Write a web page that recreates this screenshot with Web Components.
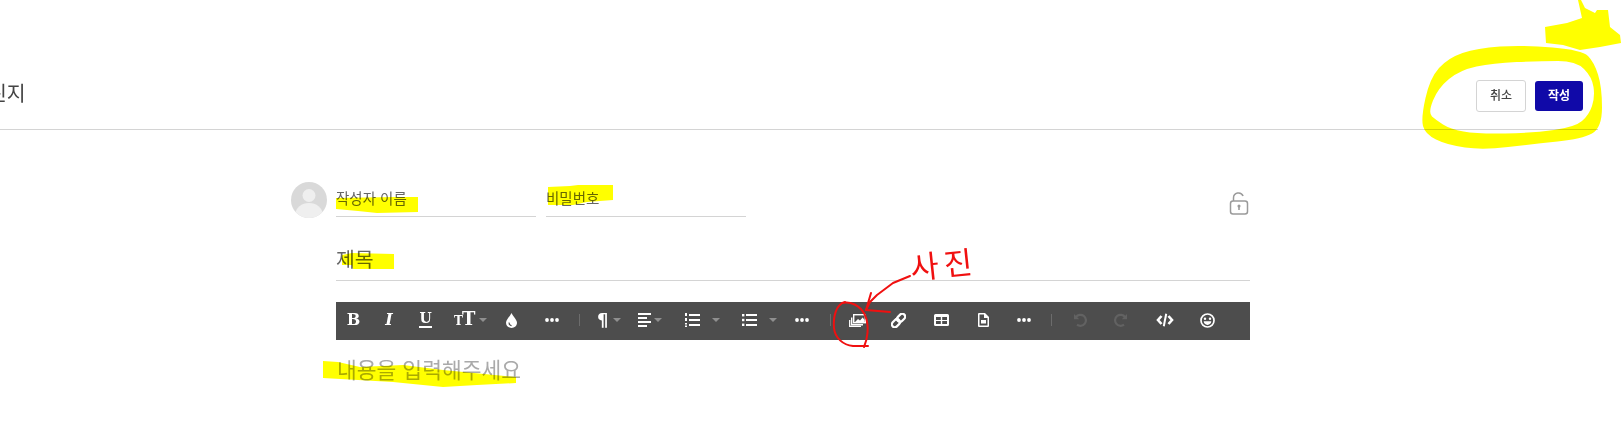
<!DOCTYPE html>
<html lang="ko">
<head>
<meta charset="utf-8">
<title>글쓰기</title>
<style>
html,body{margin:0;padding:0;background:#fff;}
body{height:424px;overflow:hidden;position:relative;font-family:"Noto Sans CJK KR","Noto Sans",sans-serif;color:#444;}
</style>
</head>
<body>
<page-header></page-header>
<write-form></write-form>
<mark-up></mark-up>

<script>
class pageHeader extends HTMLElement {
    constructor(){
        super();
        this.attachShadow({mode:'open'});
    }
    getTemplate(){
        const template = document.createElement('template')
        template.innerHTML = `
            <div class="header">
                <div class="header__title">린지</div>
                <div class="header__buttons">
                    <button class="cancel">취소</button>
                    <button class="submit">작성</button>
                </div>
            </div>
            ${this.getStyles()}
        `;
        return template;
    }
    getStyles(){
        return `
            <style>
                :host{display:block;width:1598px;overflow:hidden;}
                .header{
                    height:129px;
                    border-bottom:1px solid #d4d4d4;
                    display:flex;
                    justify-content:space-between;
                    align-items:flex-end;
                    padding:0 15px 0 0;
                }
                .header__title{
                    font-size:20.5px;
                    line-height:30px;
                    margin:0 0 22px -12px;
                    color:#444;
                }
                .header__buttons{display:flex;align-items:center;gap:9px;margin-bottom:17px;}
                button{
                    font-family:inherit;
                    font-size:12px;
                    font-weight:500;
                    border-radius:3px;
                    padding:0 0 3px;
                    box-sizing:border-box;
                }
                .cancel{width:50px;height:32px;background:#fff;border:1px solid #d4d4d4;color:#444;}
                .submit{width:48px;height:30px;background:#1009a8;border:0;color:#fff;font-weight:700;}
            </style>
        `
    }
    render(){
        this.shadowRoot.appendChild(this.getTemplate().content.cloneNode(true))
    }
    connectedCallback(){
        this.render();
    }
}
customElements.define("page-header", pageHeader)

class lineField extends HTMLElement {
    constructor(){
        super();
        this.attachShadow({mode:'open'});
    }
    connectedCallback(){
        this.shadowRoot.innerHTML = `
            <style>
                :host{display:block;width:200px;height:35px;box-sizing:border-box;border-bottom:1px solid #d4d4d4;}
                div{font-size:14.5px;line-height:20px;padding:6px 0 0 0;color:#666;}
            </style>
            <div><slot></slot></div>
        `
    }
}
customElements.define("line-field", lineField)

class toolBtn extends HTMLElement {
    constructor(){
        super();
        this.attachShadow({mode:'open'});
    }
    connectedCallback(){
        const w = this.getAttribute('w') || 36;
        const caret = this.hasAttribute('caret');
        const gap = this.getAttribute('gap') || 5;
        const off = this.getAttribute('off') || 0;
        this.shadowRoot.innerHTML = `
            <style>
                :host{display:flex;align-items:center;justify-content:${caret?'flex-start':'center'};width:${w}px;height:36px;color:#fff;flex:none;margin-bottom:2px;}
                .wrap{display:flex;align-items:center;margin-left:${off}px;}
                .caret{width:0;height:0;border-left:4px solid transparent;border-right:4px solid transparent;border-top:4px solid #8f8f8f;margin-left:${gap}px;}
            </style>
            <div class="wrap"><slot></slot>${caret?'<span class="caret"></span>':''}</div>
        `
    }
}
customElements.define("tool-btn", toolBtn)

class editorToolbar extends HTMLElement {
    constructor(){
        super();
        this.attachShadow({mode:'open'});
    }
    connectedCallback(){
        const dots = `<svg width="14" height="4" viewBox="0 0 14 4" fill="#fff"><circle cx="2" cy="2" r="1.9"/><circle cx="7" cy="2" r="1.9"/><circle cx="12" cy="2" r="1.9"/></svg>`;
        this.shadowRoot.innerHTML = `
            <style>
                :host{display:flex;align-items:center;height:38px;background:#4d4d4d;color:#fff;}
                .t{font-family:"DejaVu Serif","Liberation Serif",serif;font-weight:700;line-height:16px;}
                .sep{width:1px;height:12px;background:#6c6c6c;flex:none;margin:0 5px 2px 4px;}
                svg{display:block;}
            </style>
            <tool-btn w="35"><span class="t" style="font-size:16px">B</span></tool-btn>
            <tool-btn w="36"><span class="t" style="font-size:16px;font-style:italic">I</span></tool-btn>
            <tool-btn w="37"><span class="t" style="font-size:14px;line-height:13px;border-bottom:2px solid #fff;padding-bottom:1px">U</span></tool-btn>
            <tool-btn w="50" caret off="10" gap="5"><span class="t" style="font-size:18px;letter-spacing:-1px"><span style="font-size:12px">T</span>T</span></tool-btn>
            <tool-btn w="35">
                <svg width="11" height="15" viewBox="0 0 11 15"><path d="M5.500 0C7 3.400 11 6.600 11 9.800 11 12.700 8.600 15 5.500 15S0 12.700 0 9.800C0 6.600 4 3.400 5.500 0Z" fill="#fff"/><path d="M3 9.500c0 2 1 3 2.600 3.200" stroke="#4d4d4d" stroke-width="1.100" fill="none"/></svg>
            </tool-btn>
            <tool-btn w="46">${dots}</tool-btn>
            <div class="sep"></div>
            <tool-btn w="46" caret off="12" gap="5"><span class="t" style="font-size:18px;font-family:'DejaVu Sans',sans-serif">¶</span></tool-btn>
            <tool-btn w="46" caret off="7" gap="3">
                <svg width="13" height="14" viewBox="0 0 13 14" fill="#fff"><rect width="13" height="2"/><rect y="4" width="9" height="2"/><rect y="8" width="13" height="2"/><rect y="12" width="9" height="2"/></svg>
            </tool-btn>
            <tool-btn w="55" caret off="8" gap="12">
                <svg width="15" height="14" viewBox="0 0 15 14" fill="#fff"><rect x="4" y="1" width="11" height="2"/><rect x="4" y="6" width="11" height="2"/><rect x="4" y="11" width="11" height="2"/><rect x="0" y="0" width="2" height="3"/><rect x="0" y="5" width="2" height="3"/><rect x="0" y="10" width="2" height="1.500"/><rect x="0" y="12.500" width="2" height="1.500"/></svg>
            </tool-btn>
            <tool-btn w="46" caret off="10" gap="12">
                <svg width="15" height="12" viewBox="0 0 15 12" fill="#fff"><rect x="4" y="0" width="11" height="2"/><rect x="4" y="5" width="11" height="2"/><rect x="4" y="10" width="11" height="2"/><rect x="0" y="0" width="2.400" height="2.400"/><rect x="0" y="4.800" width="2.400" height="2.400"/><rect x="0" y="9.600" width="2.400" height="2.400"/></svg>
            </tool-btn>
            <tool-btn w="48">${dots}</tool-btn>
            <div class="sep"></div>
            <tool-btn w="43">
                <svg width="17" height="13" viewBox="0 0 17 13" fill="none" stroke="#fff">
                    <rect x="4.700" y=".7" width="11.600" height="8" stroke-width="1.400"/>
                    <path d="M6 8l3-3 2 1.600 2.600-3 2 2.400v2H6Z" fill="#fff" stroke="none"/>
                    <path d="M2.700 3.500v7.300H14" stroke-width="1.400"/>
                    <path d="M.7 6v6.300H12" stroke-width="1.300"/>
                </svg>
            </tool-btn>
            <tool-btn w="38">
                <svg width="15" height="15" viewBox="0 0 15 15" fill="none" stroke="#fff" stroke-width="2.200">
                    <rect x="7.200" y=".3" width="5.800" height="9" rx="2.900" transform="rotate(45 10.100 4.800)"/>
                    <rect x="2" y="5.700" width="5.800" height="9" rx="2.900" transform="rotate(45 4.900 10.200)"/>
                </svg>
            </tool-btn>
            <tool-btn w="48">
                <svg width="15" height="12" viewBox="0 0 15 12" fill="#fff" fill-rule="evenodd"><path d="M1.500 0h12A1.500 1.500 0 0 1 15 1.500v9a1.500 1.500 0 0 1-1.500 1.500h-12A1.500 1.500 0 0 1 0 10.500v-9A1.500 1.500 0 0 1 1.500 0ZM2 3v2.900h4.800V3Zm6.200 0v2.900H13V3ZM2 7.100V10h4.800V7.100Zm6.200 0V10H13V7.100Z"/></svg>
            </tool-btn>
            <tool-btn w="36">
                <svg width="11" height="14" viewBox="0 0 11 14" fill="#fff" fill-rule="evenodd"><path d="M0 1a1 1 0 0 1 1-1h6l4 4v9a1 1 0 0 1-1 1H1a1 1 0 0 1-1-1Zm1.500.500v11h8V5H6V1.500ZM3 7h5v3.500H3Z"/></svg>
            </tool-btn>
            <tool-btn w="46">${dots}</tool-btn>
            <div class="sep" style="margin-right:9px"></div>
            <tool-btn w="38">
                <svg width="14" height="14" viewBox="0 0 14 14" fill="none" stroke="#626262" stroke-width="2.200"><path d="M3 4A5.500 5.500 0 1 1 4 11.600"/><path d="M1 1v5.200h5.200" fill="#626262" stroke="none"/></svg>
            </tool-btn>
            <tool-btn w="44">
                <svg width="14" height="14" viewBox="0 0 14 14" fill="none" stroke="#626262" stroke-width="2.200"><path d="M11 4A5.500 5.500 0 1 0 10 11.600"/><path d="M13 1v5.200H7.800" fill="#626262" stroke="none"/></svg>
            </tool-btn>
            <tool-btn w="44">
                <svg width="18" height="14" viewBox="0 0 18 14" fill="none" stroke="#fff" stroke-width="2.600"><path d="M5.500 3 2 7l3.500 4"/><path d="M12.500 3 16 7l-3.500 4"/><path d="M10.200 .8 7.800 13.200" stroke-width="2"/></svg>
            </tool-btn>
            <tool-btn w="41">
                <svg width="15" height="15" viewBox="0 0 15 15"><circle cx="7.500" cy="7.500" r="6.500" fill="none" stroke="#fff" stroke-width="1.700"/><circle cx="5" cy="5.700" r="1.200" fill="#fff"/><circle cx="10" cy="5.700" r="1.200" fill="#fff"/><path d="M3.700 8.300h7.600c0 2-1.700 3.600-3.800 3.600S3.700 10.300 3.700 8.300Z" fill="#fff"/></svg>
            </tool-btn>
        `
    }
}
customElements.define("editor-toolbar", editorToolbar)

class writeForm extends HTMLElement {
    constructor(){
        super();
        this.attachShadow({mode:'open'});
    }
    getTemplate(){
        const template = document.createElement('template')
        template.innerHTML = `
            <section class="main">
                <div class="main__author">
                    <svg class="avatar" width="36" height="36" viewBox="0 0 36 36">
                        <clipPath id="c"><circle cx="18" cy="18" r="18"/></clipPath>
                        <circle cx="18" cy="18" r="18" fill="#d9d9d9"/>
                        <circle cx="18" cy="13.500" r="6.500" fill="#efefef"/>
                        <ellipse cx="18" cy="32" rx="13.500" ry="11" fill="#efefef" clip-path="url(#c)"/>
                    </svg>
                    <line-field>작성자 이름</line-field>
                    <line-field>비밀번호</line-field>
                    <svg class="lock" width="20" height="24" viewBox="0 0 20 24" fill="none" stroke="#9a9a9a" stroke-width="1.500">
                        <rect x="1.500" y="9" width="17" height="13" rx="2.500"/>
                        <path d="M4.500 9V6a5 5 0 0 1 9.600-2"/>
                        <path d="M10 14v4" stroke-width="1.600"/><circle cx="10" cy="14" r=".8" fill="#9a9a9a"/>
                    </svg>
                </div>
                <div class="main__body">
                    <div class="title">제목</div>
                    <editor-toolbar></editor-toolbar>
                    <div class="placeholder">내용을 입력해주세요</div>
                </div>
            </section>
            ${this.getStyles()}
        `;
        return template;
    }
    getStyles(){
        return `
            <style>
                :host{display:block;}
                .main{width:959px;margin:52px 0 0 291px;}
                .main__author{display:flex;align-items:flex-start;gap:10px;height:36px;}
                .avatar{flex:none;margin-right:-1px;}
                .lock{margin-left:auto;margin-top:10px;margin-right:1px;flex:none;}
                .main__body{margin-left:45px;}
                .title{
                    margin-top:22px;
                    margin-bottom:21px;
                    height:41px;
                    box-sizing:border-box;
                    border-bottom:1px solid #d4d4d4;
                    font-size:20.500px;
                    line-height:30px;
                    color:#666;
                    padding-top:3px;
                }
                .placeholder{
                    margin-top:13px;
                    font-size:21.500px;
                    line-height:32px;
                    color:#aaa;
                    padding-left:1px;
                }
            </style>
        `
    }
    render(){
        this.shadowRoot.appendChild(this.getTemplate().content.cloneNode(true))
    }
    connectedCallback(){
        this.render();
    }
}
customElements.define("write-form", writeForm)

// 스크린샷 위에 그려진 형광펜, 빨간펜 표시
class markUp extends HTMLElement {
    constructor(){
        super();
        this.attachShadow({mode:'open'});
    }
    smooth(pts){
        const mid = (a,b) => [(a[0]+b[0])/2,(a[1]+b[1])/2];
        let d = 'M'+mid(pts[pts.length-1],pts[0]).join(' ');
        pts.forEach((p,i) => {
            d += 'Q'+p.join(' ')+' '+mid(p,pts[(i+1)%pts.length]).join(' ');
        });
        return d+'Z';
    }
    connectedCallback(){
        const outer = [[1421,118],[1430,78],[1448,58],[1477,48],[1523,45],[1582,50],[1594,62],[1602,87],[1602,128],[1582,139],[1533,144],[1483,150],[1447,145],[1425,134]];
        const inner = [[1428,113],[1438,88],[1460,70],[1493,63],[1540,61],[1576,61],[1592,77],[1595,97],[1589,115],[1575,127],[1533,133],[1477,134],[1450,129],[1436,120]];
        this.shadowRoot.innerHTML = `
            <style>
                :host{position:absolute;left:0;top:0;width:1621px;height:424px;pointer-events:none;}
                svg{position:absolute;left:0;top:0;}
                .yellow{mix-blend-mode:multiply;}
                .word{position:absolute;left:910px;top:241px;font-size:31px;line-height:44px;color:#f01010;font-weight:400;letter-spacing:5px;transform:rotate(-6deg);}
            </style>
            <svg class="yellow" width="1621" height="424" viewBox="0 0 1621 424" fill="#ffff00">
                <path fill-rule="evenodd" d="${this.smooth(outer)}${this.smooth(inner)}"/>
                <path d="M1581 0 1585 8 1595 13 1597 10 1608 10 1610 27 1620 35 1621 43 1600 47 1580 50 1563 45 1546 43 1545 27 1567 23 1582 18 1578 0Z"/>
                <path d="M336 198 395 197 418 197 418 212 377 213 358 211 336 209Z"/>
                <path d="M548 187 570 186 578 185 613 185 613 200 587 202 573 205 548 205Z"/>
                <path d="M342 255 352 253 394 254 394 269 353 269 352 265 342 265Z"/>
                <path d="M323 361 338 362 360 367 403 365 443 370 516 377 516 383 477 385 443 387 393 382 323 378Z"/>
            </svg>
            <svg width="1621" height="424" viewBox="0 0 1621 424" fill="none" stroke="#f01010" stroke-width="2" stroke-linecap="round" stroke-linejoin="round">
                <path d="M845 302C836 304 833 317 834 328 835 338 843 345 853 346L868 346"/>
                <path d="M864 347C867 340 870 327 865 315 860 305 850 301 842 303"/>
                <path d="M910 276 893 283 877 295 870 302 866 310"/>
                <path d="M871 293 866 310 890 312"/>
            </svg>
            <div class="word">사진</div>
        `
    }
}
customElements.define("mark-up", markUp)
</script>
</body>
</html>
